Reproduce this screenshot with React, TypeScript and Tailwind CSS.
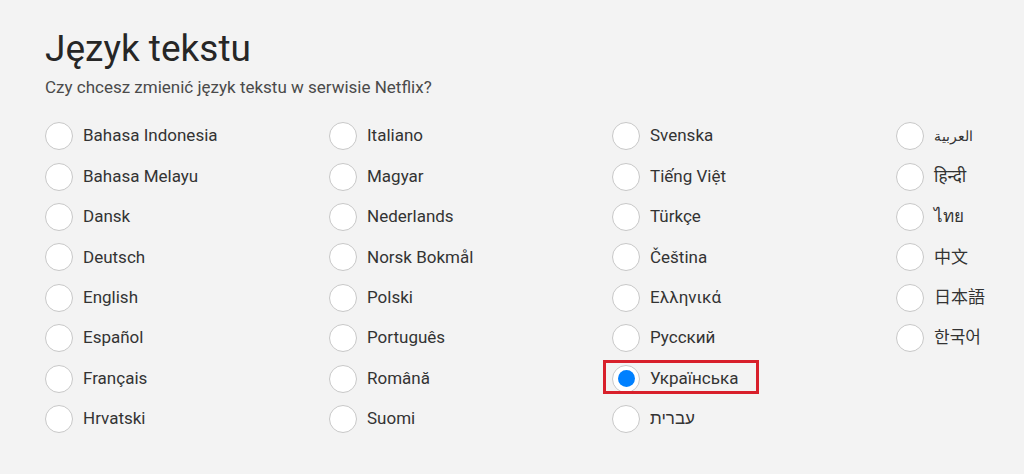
import React from "react";

const cols: string[][] = [
  ["Bahasa Indonesia", "Bahasa Melayu", "Dansk", "Deutsch", "English", "Español", "Français", "Hrvatski"],
  ["Italiano", "Magyar", "Nederlands", "Norsk Bokmål", "Polski", "Português", "Română", "Suomi"],
  ["Svenska", "Tiếng Việt", "Türkçe", "Čeština", "Ελληνικά", "Русский", "Українська", "עברית"],
  ["العربية", "हिन्दी", "ไทย", "中文", "日本語", "한국어"],
];

function Item({ label, selected }: { label: string; selected?: boolean }) {
  const small = label === "العربية";
  return (
    <div className="relative flex h-[40.4px] items-center">
      {selected && (
        <div className="absolute left-[-9px] top-[2px] h-[34px] w-[156px] border-[3px] border-[#d8202b]" />
      )}
      <span className="flex h-[28px] w-[28px] shrink-0 items-center justify-center rounded-full border border-[#c8c8c8] bg-white">
        {selected && <span className="h-[17px] w-[17px] rounded-full bg-[#0080ff]" />}
      </span>
      <span className={small ? "ml-[10px] text-[14px] text-[#333]" : "ml-[10px] text-[17px] text-[#333]"} dir="auto">
        {label}
      </span>
    </div>
  );
}

export default function App() {
  return (
    <div
      className="h-[474px] w-[1024px] overflow-hidden bg-[#f3f3f3] pl-[45px] pt-[27px]"
      style={{ fontFamily: '"Roboto", "Noto Sans", "Noto Sans CJK SC", "Noto Sans CJK KR", sans-serif' }}
    >
      <h1 className="text-[37px] leading-[44px] text-[#262626]">Język tekstu</h1>
      <p className="mt-[6px] text-[17px] leading-[20px] text-[#4a4a4a]">Czy chcesz zmienić język tekstu w serwisie Netflix?</p>
      <div className="mt-[19px] grid grid-cols-[284px_283px_284px_1fr]">
        {cols.map((c, i) => (
          <div key={i} className="flex flex-col">
            {c.map((l) => (
              <Item key={l} label={l} selected={l === "Українська"} />
            ))}
          </div>
        ))}
      </div>
    </div>
  );
}
